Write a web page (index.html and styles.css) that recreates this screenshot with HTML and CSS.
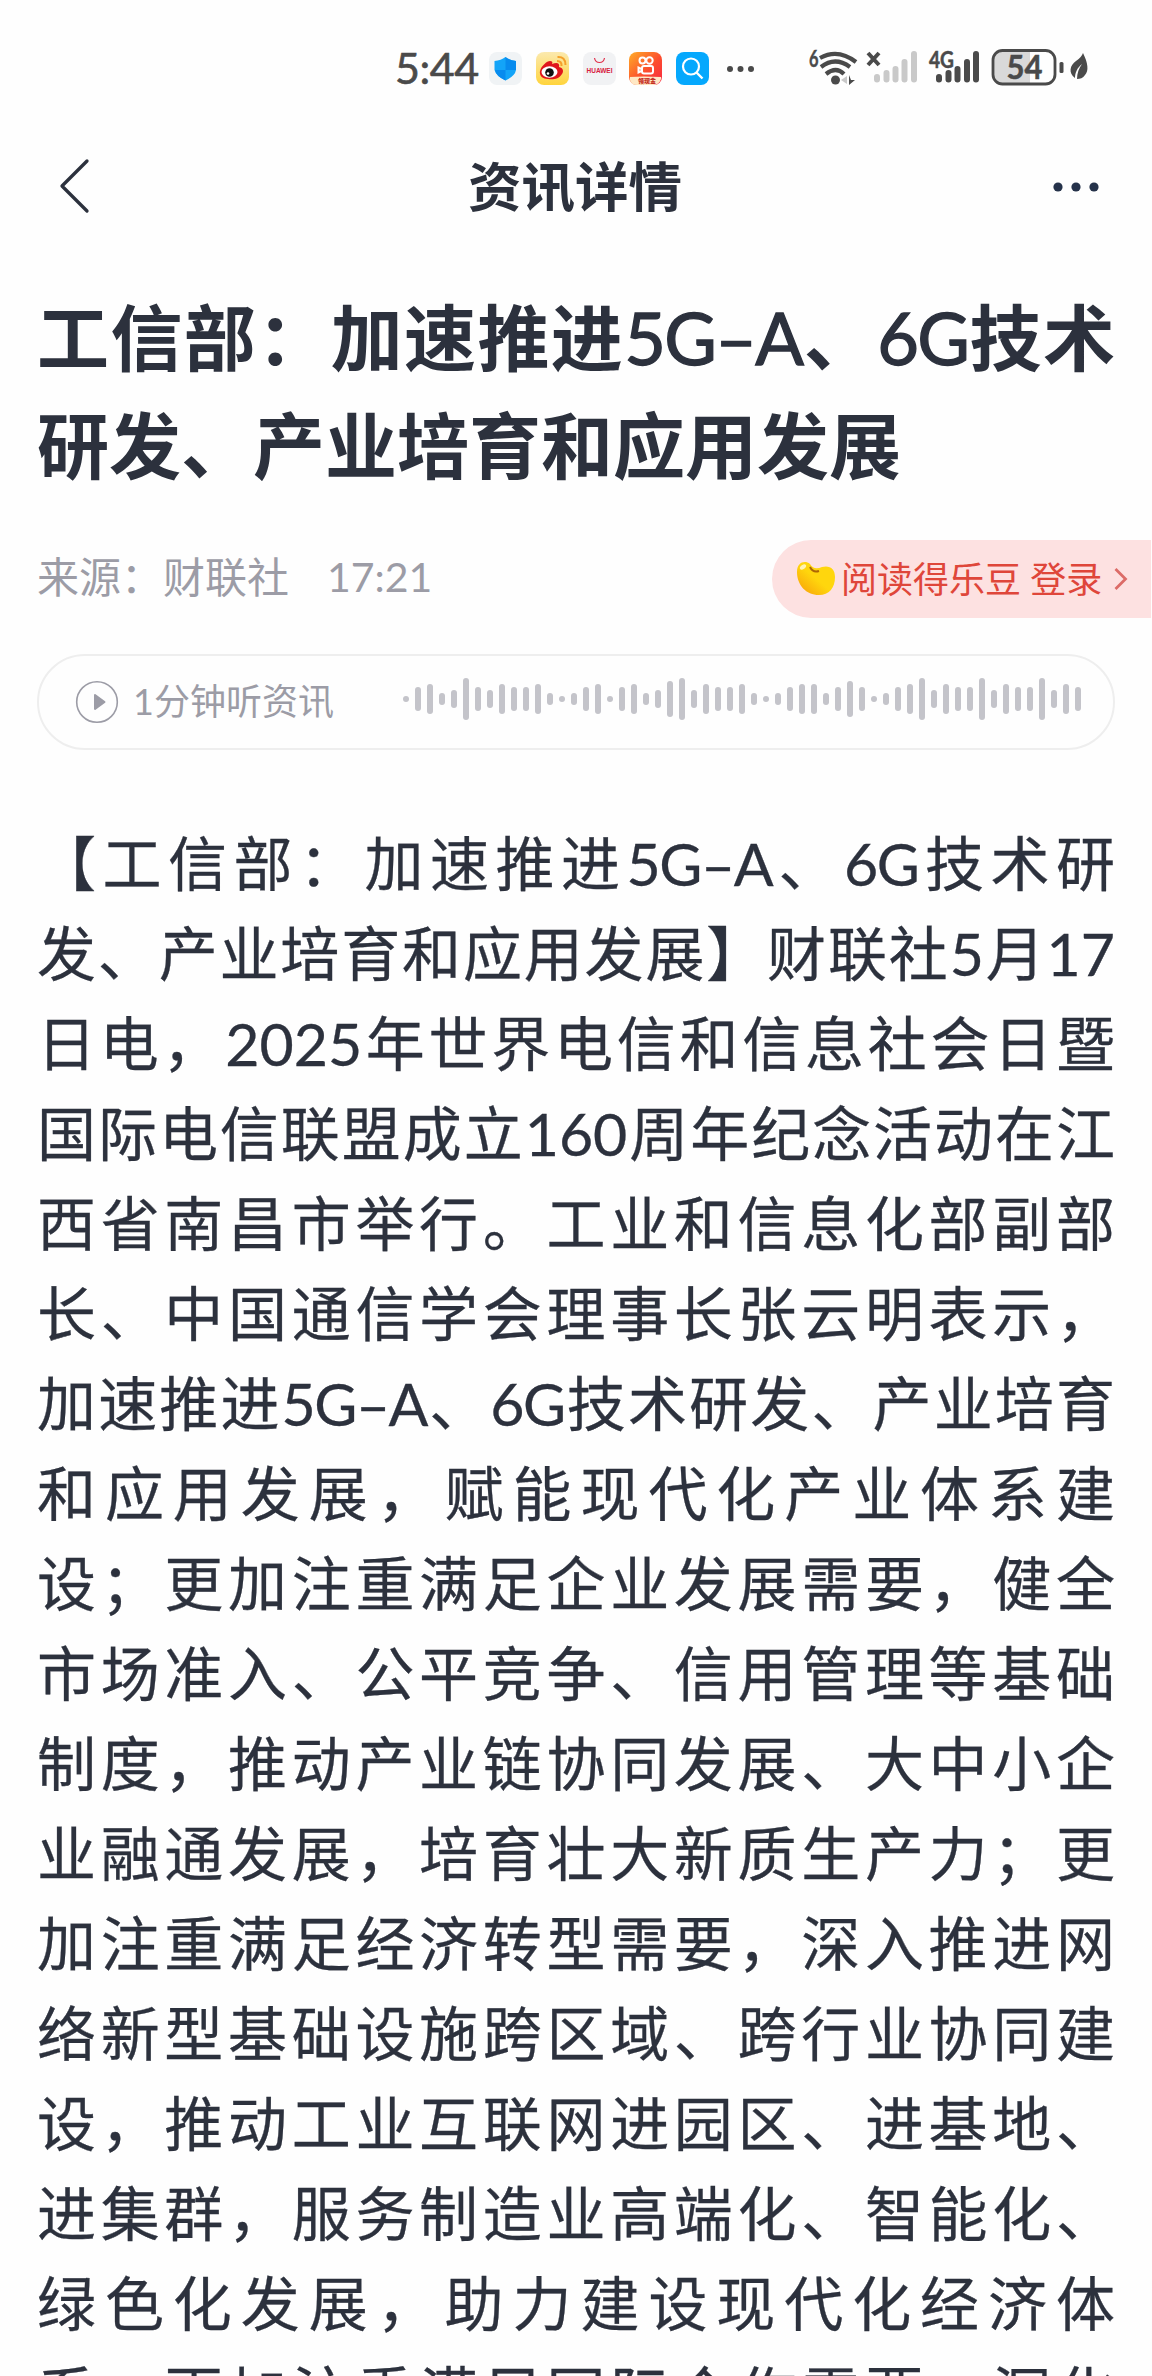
FILE: index.html
```html
<!DOCTYPE html>
<html lang="zh-CN">
<head>
<meta charset="utf-8">
<title>资讯详情</title>
<link rel="stylesheet" href="styles.css">
</head>
<body>
<div class="status">
  <span class="clock">5:44</span>
  <svg class="app" viewBox="0 0 33 33"><rect width="33" height="33" rx="8" fill="#f0f3f5"/><path d="M16.5 5Q21 8.500 27 9v9q-1 6-10.500 10.500Q7 24 5.500 18V9Q12 8.500 16.500 5Z" fill="#13a4f8"/><path d="M16.500 5Q21 8.500 27 9v9h-10.500ZM6 18h10.500v10.500Q7 24 6 18Z" fill="#078bee"/></svg>
  <svg class="app" viewBox="0 0 33 33"><defs><linearGradient id="wb" x2="0" y2="1"><stop stop-color="#fbe9ae"/><stop offset="1" stop-color="#ffd43c"/></linearGradient></defs><rect width="33" height="33" rx="8" fill="url(#wb)"/><path d="M4 19c1-5 7-10 10-10 2 0 3 1 2 3 5-2 8-1 7 3 4 1 5 4 3 7-3 5-9 6-14 5-5 0-9-3-8-8Z" fill="#e0161c"/><ellipse cx="13.500" cy="20" rx="8" ry="5.700" fill="#fff"/><circle cx="13.500" cy="20.500" r="4.300" fill="#111"/><circle cx="12" cy="21.500" r="1.300" fill="#fff"/><path d="M21 9q5 0 4.500 5M21.500 5q8-.5 8 8" fill="none" stroke="#f5a02a" stroke-width="2"/></svg>
  <svg class="app" viewBox="0 0 33 33"><rect width="33" height="33" rx="8" fill="#f1f2f4"/><path d="M11.500 6c1 6 9 6 10 0" fill="none" stroke="#e0304c" stroke-width="1.200"/><text x="16.500" y="21" text-anchor="middle" textLength="26" lengthAdjust="spacingAndGlyphs" class="brand">HUAWEI</text></svg>
  <svg class="app" viewBox="0 0 33 33"><defs><linearGradient id="ks" y2="1"><stop stop-color="#ffad27"/><stop offset=".55" stop-color="#fc4e2d"/><stop offset="1" stop-color="#f82743"/></linearGradient></defs><rect width="33" height="33" rx="8" fill="url(#ks)"/><path d="M1 25q12-1 31 0v2q-2 6-8 6H8q-6 0-7-5Z" fill="#ffe8c5"/><g fill="none" stroke="#fff" stroke-width="2"><circle cx="13.500" cy="8.500" r="3"/><circle cx="20.500" cy="8.500" r="3.200"/><rect x="13" y="14" width="11" height="7.500" rx="2"/><path d="M12.500 17l-3-1.500v5l3-1.500"/></g><text x="18" y="31" text-anchor="middle" class="promo">领现金</text></svg>
  <svg class="app" viewBox="0 0 33 33"><rect width="33" height="33" rx="8" fill="#05a8fd"/><circle cx="15" cy="14.500" r="8" fill="none" stroke="#fff" stroke-width="2.200"/><path d="M20.500 20.500l6 6" stroke="#fff" stroke-width="2.400"/></svg>
  <svg class="more-apps" viewBox="0 0 27 8"><circle cx="3" cy="4" r="3"/><circle cx="13.500" cy="4" r="3"/><circle cx="24" cy="4" r="3"/></svg>
  <svg class="signals" viewBox="0 0 286 40">
    <text x="1" y="19" class="net" textLength="9.500" lengthAdjust="spacingAndGlyphs">6</text>
    <g fill="none" stroke="#4a4a4a" stroke-width="4.200"><path d="M12 10Q30 0 48 14"/><path d="M13 19Q27 8 42 19"/><path d="M18 26q10-8 18 0"/></g>
    <circle cx="27.500" cy="32" r="4.500" fill="#4a4a4a"/><path d="M33 32l6-4v8Z" fill="#c9c9c9"/><path d="M41 27v10l6-5h-4Z" fill="#4a4a4a"/>
    <path d="M60 5l11 12M71 5l-11 12" stroke="#4a4a4a" stroke-width="4"/>
    <g stroke="#c9c9c9" stroke-width="6" stroke-linecap="round"><path d="M69 29v2.500M78.500 25v6.500M87.500 21v10.500M96.500 14v17.500M106 6v25.500"/></g>
    <text x="121" y="20" class="net" textLength="25" lengthAdjust="spacingAndGlyphs">4G</text>
    <g stroke="#4a4a4a" stroke-width="6" stroke-linecap="round"><path d="M131 29v2.500M140.500 25v6.500M149.500 21v10.500M159 14v17.500M168 6v25.500"/></g>
    <path d="M195 3h27v32h-27q-9 0-9-9V12q0-9 9-9Z" fill="#d9d9d9"/>
    <rect x="185" y="2.500" width="62" height="33.500" rx="9.500" fill="none" stroke="#4a4a4a" stroke-width="2.800"/>
    <text x="216.500" y="31" class="level" text-anchor="middle" textLength="36" lengthAdjust="spacingAndGlyphs">54</text>
    <rect x="251.500" y="14" width="4" height="11" rx="1.500" fill="#4a4a4a"/>
    <path d="M275 5c5 10 6 18 2 22-2 3-5 4-8 4 0-6 2-11 5-15-5 4-7 9-7 14-7-5-5-13 1-17 4-3 6-5 7-8Z" fill="#4a4a4a"/>
  </svg>
</div>
<header class="nav">
  <svg class="back" viewBox="0 0 32 56"><path d="M29 3L4 28L29 53"/></svg>
  <span class="nav-title">资讯详情</span>
  <svg class="dots" viewBox="0 0 48 12"><circle cx="6" cy="6" r="4.600"/><circle cx="24" cy="6" r="4.600"/><circle cx="42" cy="6" r="4.600"/></svg>
</header>
<main>
  <h1><span class="full">工信部：加速推进<span class="latin">5G–A</span>、<span class="latin">6G</span>技术</span><span class="line">研发、产业培育和应用发展</span></h1>
  <div class="meta">
    <span class="source">来源：财联社</span><span class="time">17:21</span>
    <a class="reward"><svg class="bean" viewBox="0 0 40 36"><defs><linearGradient id="bn" x1="1" x2="0" y2="1"><stop offset=".5" stop-color="#ffd60d"/><stop offset="1" stop-color="#f79a09"/></linearGradient></defs><path d="M1 11C1 1 9-1 14 3c3 5 7 5 12 3 8-2 13 2 13 10 0 11-6 18-16 18C10 34 1 24 1 11Z" fill="url(#bn)"/><path d="M14 6q3 6 9 4" fill="none" stroke="#ad6605" stroke-width="2"/><ellipse cx="7" cy="6" rx="3.500" ry="2" transform="rotate(-35 7 6)" fill="#fff3b5"/></svg><span>阅读得乐豆 登录</span><svg class="arrow" viewBox="0 0 14 22"><path d="M1.500 1l10 10l-10 10"/></svg></a>
  </div>
  <div class="audio">
    <svg class="play" viewBox="0 0 44 44"><circle cx="22" cy="22" r="20.300" fill="none" stroke="#9c9ca6" stroke-width="1.600"/><path d="M20 15l9.500 7l-9.500 7Z" fill="#9c9ca6" stroke="#9c9ca6" stroke-width="2" stroke-linejoin="round"/></svg>
    <span class="listen">1分钟听资讯</span>
    <div class="wave"></div>
  </div>
  <article>
    <p>【工信部：加速推进<span class="term">5G–A</span>、<span class="term">6G</span>技术研</p>
    <p>发、产业培育和应用发展】财联社5月17</p>
    <p>日电，2025年世界电信和信息社会日暨</p>
    <p>国际电信联盟成立160周年纪念活动在江</p>
    <p>西省南昌市举行。工业和信息化部副部</p>
    <p>长、中国通信学会理事长张云明表示，</p>
    <p>加速推进<span class="term">5G–A</span>、<span class="term">6G</span>技术研发、产业培育</p>
    <p>和应用发展，赋能现代化产业体系建</p>
    <p>设；更加注重满足企业发展需要，健全</p>
    <p>市场准入、公平竞争、信用管理等基础</p>
    <p>制度，推动产业链协同发展、大中小企</p>
    <p>业融通发展，培育壮大新质生产力；更</p>
    <p>加注重满足经济转型需要，深入推进网</p>
    <p>络新型基础设施跨区域、跨行业协同建</p>
    <p>设，推动工业互联网进园区、进基地、</p>
    <p>进集群，服务制造业高端化、智能化、</p>
    <p>绿色化发展，助力建设现代化经济体</p>
    <p>系，更加注重满足国际合作需要，深化</p>
  </article>
</main>
<script src="wave.js"></script>
</body>
</html>
```
FILE: wave.js
```js
const heights = [6,24,30,12,18,42,24,18,30,24,24,30,12,6,12,24,30,6,24,30,12,18,36,42,18,30,24,24,30,12,6,12,24,30,30,12,24,36,24,6,12,24,30,42,18,30,24,24,42,18,30,24,24,42,18,30,24];
const wave = document.querySelector('.wave');
for (const h of heights) {
  const bar = document.createElement('i');
  bar.style.height = h + 'px';
  wave.append(bar);
}
```
FILE: styles.css
```css
* { box-sizing: border-box; }
html, body { height: 2376px; overflow: hidden; }
body {
  margin: 0;
  background: #fefefe;
  color: #2c313d;
  font-family: Lato, "Noto Sans CJK SC", sans-serif;
}
svg { display: block; flex: none; }

.status { display: flex; align-items: center; height: 137px; padding-left: 395px; }
.clock { width: 94px; margin-top: -2px; font-size: 43px; color: #4a4a4a; white-space: nowrap; letter-spacing: -.5px; -webkit-text-stroke: .6px #4a4a4a; }
.app { width: 33px; height: 33px; margin-right: 13.800px; }
.brand { font: bold 7px "Liberation Sans", sans-serif; fill: #d7213f; }
.promo { font: 900 6px "Noto Sans CJK SC", sans-serif; fill: #c42a1b; }
.more-apps { width: 27px; height: 8px; margin-left: 4px; fill: #4a4a4a; }
.signals { width: 286px; height: 40px; margin: -2px 0 0 54px; }
.net { font: bold 23px Lato, sans-serif; fill: #4a4a4a; stroke: #4a4a4a; stroke-width: .5px; }
.level { font: bold 33px Lato, sans-serif; fill: #4a4a4a; stroke: #4a4a4a; stroke-width: .5px; }

.nav { display: flex; align-items: center; justify-content: space-between; height: 98px; padding: 0 52px 0 58px; }
.back { width: 32px; height: 56px; fill: none; stroke: #2c313d; stroke-width: 3.300; stroke-linecap: round; stroke-linejoin: round; }
.nav-title { font-size: 53.500px; font-weight: 700; line-height: 98px; margin-left: 8px; }
.dots { width: 48px; height: 12px; margin-top: 2px; fill: #25324a; }

main { padding: 48px 37px 0 37px; }
h1 { margin: 0; font-size: 72px; line-height: 108px; font-weight: 700; white-space: nowrap; }
h1 > span { display: block; }
.full { text-align-last: justify; }
.latin { font-weight: 400; letter-spacing: -1.700px; -webkit-text-stroke: 1.300px #2c313d; }

.meta { display: flex; align-items: center; height: 78px; margin: 41px -36px 0 0; color: #9c9ca6; font-size: 42px; white-space: nowrap; }
.source, .time { line-height: 78px; padding-bottom: 4px; }
.time { margin-left: 38px; font-size: 41px; }
.reward { display: flex; align-items: center; width: 379px; height: 78px; margin-left: auto; padding-left: 24px; border-radius: 39px 0 0 39px; background: #fde1e1; color: #df463a; font-size: 36px; }
.reward span { padding-bottom: 4px; }
.bean { width: 40px; height: 36px; margin-right: 5px; }
.arrow { width: 14px; height: 22px; margin-left: 12px; fill: none; stroke: #dc6b67; stroke-width: 2.800; }

.audio { display: flex; align-items: center; height: 96px; margin-top: 36px; padding: 0 32px 0 36px; border: 2px solid #eee; border-radius: 48px; color: #9c9ca6; font-size: 36px; white-space: nowrap; }
.play { width: 44px; height: 44px; margin-right: 14px; }
.listen { padding-bottom: 6px; }
.wave { display: flex; align-items: center; gap: 6px; margin: 0 0 6px auto; }
.wave i { width: 6px; border-radius: 3px; background: #c4c4ca; }

article { margin-top: 69px; }
p { margin: 0; height: 90px; font-size: 59px; line-height: 90px; white-space: nowrap; text-align-last: justify; -webkit-text-stroke: .3px #2c313d; }
.term { letter-spacing: -1.500px; }
```
